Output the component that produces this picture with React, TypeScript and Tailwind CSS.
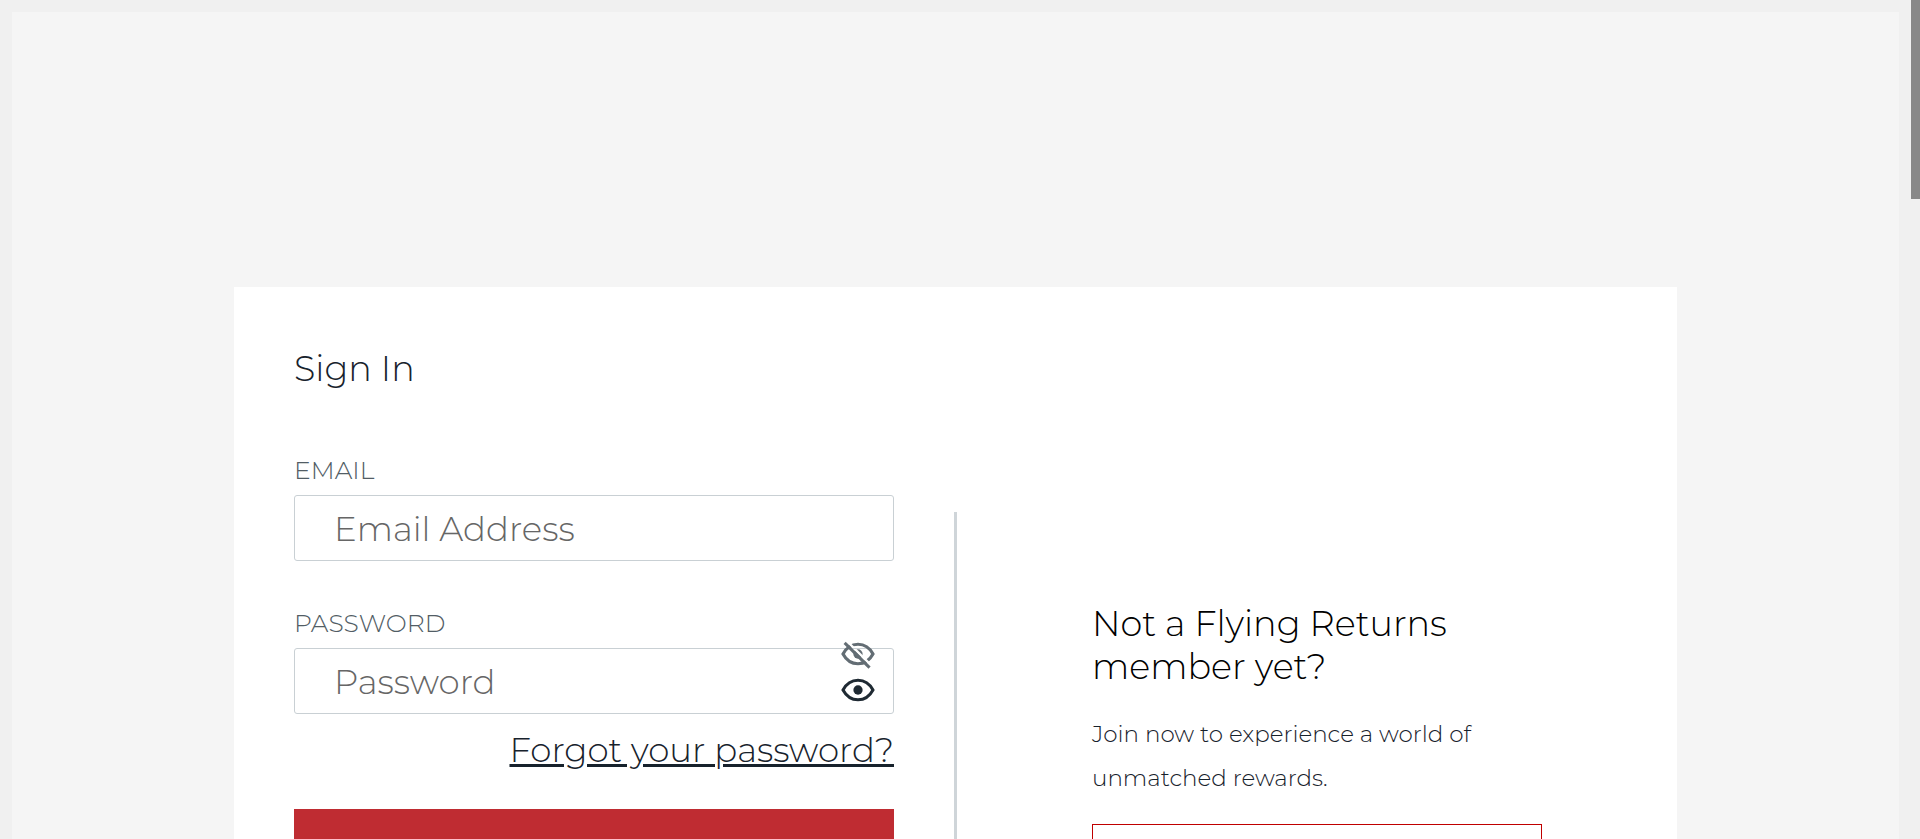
import { useState } from "react";

const LENS = "M2 12C4.2 7.9 7.8 5.5 12 5.5S19.8 7.9 22 12C19.8 16.1 16.2 18.5 12 18.5S4.2 16.1 2 12Z";

function EyeOff() {
  return (
    <svg viewBox="0 0 24 24" className="size-9 text-[#636d74]" aria-hidden="true">
      <mask id="slash-gap">
        <rect width="24" height="24" fill="white" />
        <path d="M3.6 2.4L22.2 21" stroke="black" strokeWidth="1.6" />
      </mask>
      <g mask="url(#slash-gap)">
        <path d={LENS} fill="none" stroke="currentColor" strokeWidth="2.1" />
        <circle cx="12" cy="12" r="3.1" fill="currentColor" />
      </g>
      <path d="M3.1 4.6L19.7 21.1" stroke="currentColor" strokeWidth="2" />
    </svg>
  );
}

function Eye() {
  return (
    <svg viewBox="0 0 24 24" className="size-9 text-[#1f2a33]" aria-hidden="true">
      <path d={LENS} fill="none" stroke="currentColor" strokeWidth="2" />
      <circle cx="12" cy="12" r="3.1" fill="currentColor" />
    </svg>
  );
}

const inputStyle =
  "block h-[66px] w-full rounded-[3px] border border-[#c9d0d4] bg-white px-[39px] pt-px text-[34px] font-light text-[#1f2a33] placeholder:text-[#666666] outline-none";

const labelStyle = "block text-[25px] leading-8 text-[#525d65] uppercase";

export default function App() {
  const [visible, setVisible] = useState(false);

  return (
    <div className="flex h-screen overflow-hidden bg-[#f0f0f0] font-['Montserrat','Inter',sans-serif] font-light text-[#17222c]">
      <div className="flex-1 px-3 pt-3">
        <main className="min-h-full bg-[#f5f5f5] pt-[275px]">
          <div className="mx-auto flex max-w-[1443px] bg-white">
            <form className="w-[720px] p-[60px]" onSubmit={(e) => e.preventDefault()}>
              <h1 className="text-[35px] leading-[43px]">Sign In</h1>

              <label htmlFor="email" className={`${labelStyle} mt-16`}>
                Email
              </label>
              <input id="email" type="email" placeholder="Email Address" className={`${inputStyle} mt-[9px]`} />

              <label htmlFor="password" className={`${labelStyle} mt-[46px]`}>
                Password
              </label>
              <div className="relative mt-[9px]">
                <input
                  id="password"
                  type={visible ? "text" : "password"}
                  placeholder="Password"
                  className={inputStyle}
                />
                <div className="absolute -top-3 right-[18px] flex flex-col">
                  <button type="button" aria-label="Hide password" onClick={() => setVisible(false)}>
                    <EyeOff />
                  </button>
                  <button type="button" aria-label="Show password" onClick={() => setVisible(true)}>
                    <Eye />
                  </button>
                </div>
              </div>

              <div className="mt-[14px] text-right text-[34px] leading-[44px]">
                <a href="#forgot" className="underline decoration-3 underline-offset-2">
                  Forgot your password?
                </a>
              </div>

              <button type="submit" aria-label="Sign In" className="mt-[37px] block h-[84px] w-full bg-[#bf2c32]" />
            </form>

            <div className="mt-[225px] w-[3px] bg-[#cfd5d9]" />

            <section className="flex-1 px-[135px] pt-[315px]">
              <h2 className="text-[35px] leading-[43px] text-black">Not a Flying Returns member yet?</h2>
              <p className="mt-6 text-[23px] leading-[44px]">
                Join now to experience a world of unmatched rewards.
              </p>
              <button
                type="button"
                aria-label="Sign Up"
                className="mt-6 block h-[84px] w-full border border-[#c00000] bg-white"
              />
            </section>
          </div>
        </main>
      </div>
      <div className="w-[9px] bg-[#f0f0f0]">
        <div className="h-[199px] bg-[#888888]" />
      </div>
    </div>
  );
}
